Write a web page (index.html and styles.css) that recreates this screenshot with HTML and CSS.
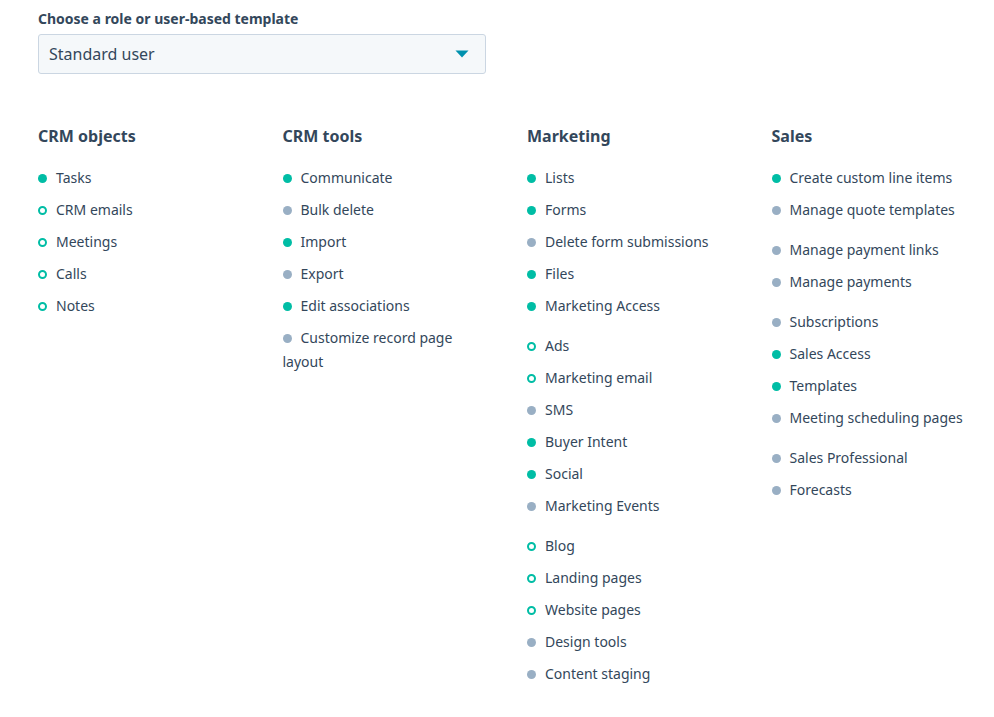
FILE: index.html
```html
<!DOCTYPE html>
<html lang="en">
<head>
<meta charset="utf-8">
<title>Permissions</title>
<link rel="stylesheet" href="styles.css">
</head>
<body>
<div class="page">
  <label class="field-label">Choose a role or user-based template</label>
  <div class="select">
    <span class="select-value">Standard user</span>
    <svg class="caret" width="14" height="8" viewBox="0 0 14 8"><path d="M0.5 0.5 H13.5 L7 7.5 Z" fill="#0091ae"/></svg>
  </div>

  <div class="columns">
    <section class="col">
      <h3 class="col-title">CRM objects</h3>
      <ul class="group">
        <li><span class="dot on"></span>Tasks</li>
        <li><span class="dot ring"></span>CRM emails</li>
        <li><span class="dot ring"></span>Meetings</li>
        <li><span class="dot ring"></span>Calls</li>
        <li><span class="dot ring"></span>Notes</li>
      </ul>
    </section>

    <section class="col">
      <h3 class="col-title">CRM tools</h3>
      <ul class="group">
        <li><span class="dot on"></span>Communicate</li>
        <li><span class="dot off"></span>Bulk delete</li>
        <li><span class="dot on"></span>Import</li>
        <li><span class="dot off"></span>Export</li>
        <li><span class="dot on"></span>Edit associations</li>
        <li><span class="dot off"></span>Customize record page layout</li>
      </ul>
    </section>

    <section class="col">
      <h3 class="col-title">Marketing</h3>
      <ul class="group">
        <li><span class="dot on"></span>Lists</li>
        <li><span class="dot on"></span>Forms</li>
        <li><span class="dot off"></span>Delete form submissions</li>
        <li><span class="dot on"></span>Files</li>
        <li><span class="dot on"></span>Marketing Access</li>
      </ul>
      <ul class="group">
        <li><span class="dot ring"></span>Ads</li>
        <li><span class="dot ring"></span>Marketing email</li>
        <li><span class="dot off"></span>SMS</li>
        <li><span class="dot on"></span>Buyer Intent</li>
        <li><span class="dot on"></span>Social</li>
        <li><span class="dot off"></span>Marketing Events</li>
      </ul>
      <ul class="group">
        <li><span class="dot ring"></span>Blog</li>
        <li><span class="dot ring"></span>Landing pages</li>
        <li><span class="dot ring"></span>Website pages</li>
        <li><span class="dot off"></span>Design tools</li>
        <li><span class="dot off"></span>Content staging</li>
      </ul>
    </section>

    <section class="col">
      <h3 class="col-title">Sales</h3>
      <ul class="group">
        <li><span class="dot on"></span>Create custom line items</li>
        <li><span class="dot off"></span>Manage quote templates</li>
      </ul>
      <ul class="group">
        <li><span class="dot off"></span>Manage payment links</li>
        <li><span class="dot off"></span>Manage payments</li>
      </ul>
      <ul class="group">
        <li><span class="dot off"></span>Subscriptions</li>
        <li><span class="dot on"></span>Sales Access</li>
        <li><span class="dot on"></span>Templates</li>
        <li><span class="dot off"></span>Meeting scheduling pages</li>
      </ul>
      <ul class="group">
        <li><span class="dot off"></span>Sales Professional</li>
        <li><span class="dot off"></span>Forecasts</li>
      </ul>
    </section>
  </div>
</div>
</body>
</html>
```

FILE: styles.css
```css
* { box-sizing: border-box; }

html, body {
  margin: 0;
  padding: 0;
  background: #ffffff;
}

body {
  font-family: "Noto Sans", "Open Sans", sans-serif;
  color: #33475b;
  font-size: 14px;
}

.page {
  padding: 9px 38px 0 38px;
}

.field-label {
  display: block;
  font-size: 14px;
  line-height: 20px;
  font-weight: 700;
  margin-bottom: 5px;
}

.select {
  width: 448px;
  height: 40px;
  background: #f5f8fa;
  border: 1px solid #cbd6e2;
  border-radius: 3px;
  display: flex;
  align-items: center;
  justify-content: space-between;
  padding: 0 16px 0 10px;
}

.select-value {
  font-size: 16px;
  line-height: 22px;
}

.caret {
  display: block;
}

.columns {
  display: flex;
  gap: 44.5px;
  margin-top: 50px;
}

.col {
  width: 200px;
  flex: none;
  display: flex;
  flex-direction: column;
  gap: 16px;
}

.col-title {
  margin: 0 0 2px 0;
  font-size: 16px;
  line-height: 24px;
  font-weight: 700;
}

.group {
  list-style: none;
  margin: 0;
  padding: 0;
  display: flex;
  flex-direction: column;
  gap: 8px;
}

.group li {
  line-height: 24px;
}

.dot {
  display: inline-block;
  width: 9px;
  height: 9px;
  border-radius: 50%;
  margin-right: 9px;
  vertical-align: 0px;
}

.dot.on { background: #00bda5; }
.dot.off { background: #99afc4; }
.dot.ring { border: 2px solid #00bda5; background: #fff; }
```
